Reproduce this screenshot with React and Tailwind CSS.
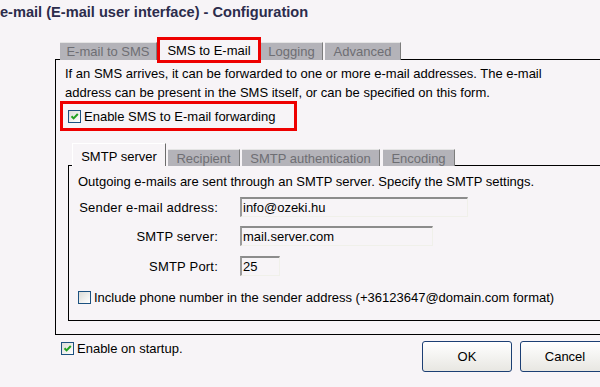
import React from 'react'

function Check({ on }) {
  return (
    <span className="relative inline-block w-[13px] h-[13px] shrink-0 border border-[#1c5180] bg-gradient-to-br from-[#dcdcd7] to-white">
      {on && (
        <svg className="absolute left-0 top-0" width="11" height="11" viewBox="0 0 11 11">
          <path d="M2.5 5.2 L4.6 7.4 L8.8 3" fill="none" stroke="#21a121" strokeWidth="2" />
        </svg>
      )}
    </span>
  )
}

function OuterTab({ label, w }) {
  return (
    <div className={`h-[18px] ${w} bg-[#b4b3b9] text-[#6e6e73] border-t border-t-[#e4e4e4] border-r border-r-[#7c7c7c] flex items-center justify-center leading-none`}>
      {label}
    </div>
  )
}

function InnerTab({ label, w }) {
  return (
    <div className={`h-[17px] ${w} bg-[#b4b3b9] text-[#6e6e73] border-t border-t-[#e4e4e4] border-r border-r-[#7c7c7c] flex items-center justify-center leading-none`}>
      {label}
    </div>
  )
}

function Field({ label, value, w, mt }) {
  return (
    <div className={`flex items-center h-[20px] ${mt}`}>
      <div className="w-[140px] text-right leading-none tracking-[0.2px]">{label}</div>
      <div className={`ml-[22px] h-[20px] ${w} border-t-2 border-l-2 border-t-[#8c8c8c] border-l-[#9a9a9a] border-b border-r border-b-[#f0f0ea] border-r-[#f0f0ea] flex items-center pl-[1px] leading-none`}>
        {value}
      </div>
    </div>
  )
}

export default function App() {
  return (
    <div className="w-[600px] h-[387px] overflow-hidden bg-[#f7f4f7] text-black text-[13px] font-['Liberation_Sans',Arial,sans-serif]">
      {/* window title */}
      <div className="h-[22px] pt-[2px] leading-[20px] text-[14.6px] font-bold text-[#2c2c4c] whitespace-nowrap">
        e-mail (E-mail user interface) - Configuration
      </div>

      <div className="ml-[55px] w-[555px] mt-[18px]">
        {/* outer tabs */}
        <div className="flex items-end h-[20px]">
          <div className="w-[5px] h-full border-b border-black" />
          <OuterTab label="E-mail to SMS" w="w-[97px]" />
          <div className="w-[3px]" />
          <div className="relative h-[20px] w-[98px] flex items-center justify-center leading-none">
            SMS to E-mail
            <div className="absolute -inset-[3px] border-[3px] border-[#ee0000]" />
          </div>
          <div className="w-[3px]" />
          <OuterTab label="Logging" w="w-[62px]" />
          <div className="w-[2px]" />
          <OuterTab label="Advanced" w="w-[76px]" />
          <div className="flex-1 h-full border-b border-black" />
        </div>

        {/* outer panel */}
        <div className="h-[275px] border-l border-b border-black pl-[9px] pt-[4px]">
          <p className="leading-[19px] whitespace-nowrap">
            If an SMS arrives, it can be forwarded to one or more e-mail addresses. The e-mail
            <br />
            address can be present in the SMS itself, or can be specified on this form.
          </p>
          <div className="-mt-[1px] -ml-[5px] w-[237px] h-[30px] border-[3px] border-[#ee0000] flex items-center pl-[5px] gap-[3px]">
            <Check on />
            <span className="leading-none">Enable SMS to E-mail forwarding</span>
          </div>

          {/* inner tabs */}
          <div className="ml-[3px] mt-[12px]">
            <div className="flex items-end h-[23px]">
              <div className="w-[4px] h-full border-b border-black" />
              <div className="h-[23px] w-[94px] border-t border-l border-t-white border-l-white border-r border-r-[#6c6c6c] flex items-center justify-center leading-none pt-[3px]">
                SMTP server
              </div>
              <div className="w-[2px]" />
              <InnerTab label="Recipient" w="w-[72px]" />
              <div className="w-[2px]" />
              <InnerTab label="SMTP authentication" w="w-[138px]" />
              <div className="w-[3px]" />
              <InnerTab label="Encoding" w="w-[72px]" />
              <div className="flex-1 h-full border-b border-black" />
            </div>

            <div className="h-[155px] border-l border-b border-black pl-[9px] pt-[6px]">
              <p className="leading-[19px] whitespace-nowrap">
                Outgoing e-mails are sent through an SMTP server. Specify the SMTP settings.
              </p>
              <Field label="Sender e-mail address:" value="info@ozeki.hu" w="w-[228px]" mt="mt-[6px]" />
              <Field label="SMTP server:" value="mail.server.com" w="w-[193px]" mt="mt-[9px]" />
              <Field label="SMTP Port:" value="25" w="w-[40px]" mt="mt-[10px]" />
              <div className="mt-[15px] flex items-center gap-[3px] whitespace-nowrap">
                <Check />
                <span className="leading-none">Include phone number in the sender address (+36123647@domain.com format)</span>
              </div>
            </div>
          </div>
        </div>

        {/* bottom row */}
        <div className="flex items-start justify-between pl-[6px]">
          <div className="mt-[7px] flex items-center gap-[3px]">
            <Check on />
            <span className="leading-none">Enable on startup.</span>
          </div>
          <div className="mt-[6px] flex gap-[8px]">
            <button className="w-[90px] h-[31px] rounded-[3px] border border-[#1c3f74] bg-gradient-to-b from-white to-[#e8e7e2] leading-none">OK</button>
            <button className="w-[90px] h-[31px] rounded-[3px] border border-[#1c3f74] bg-gradient-to-b from-white to-[#e8e7e2] leading-none">Cancel</button>
          </div>
        </div>
      </div>
    </div>
  )
}
